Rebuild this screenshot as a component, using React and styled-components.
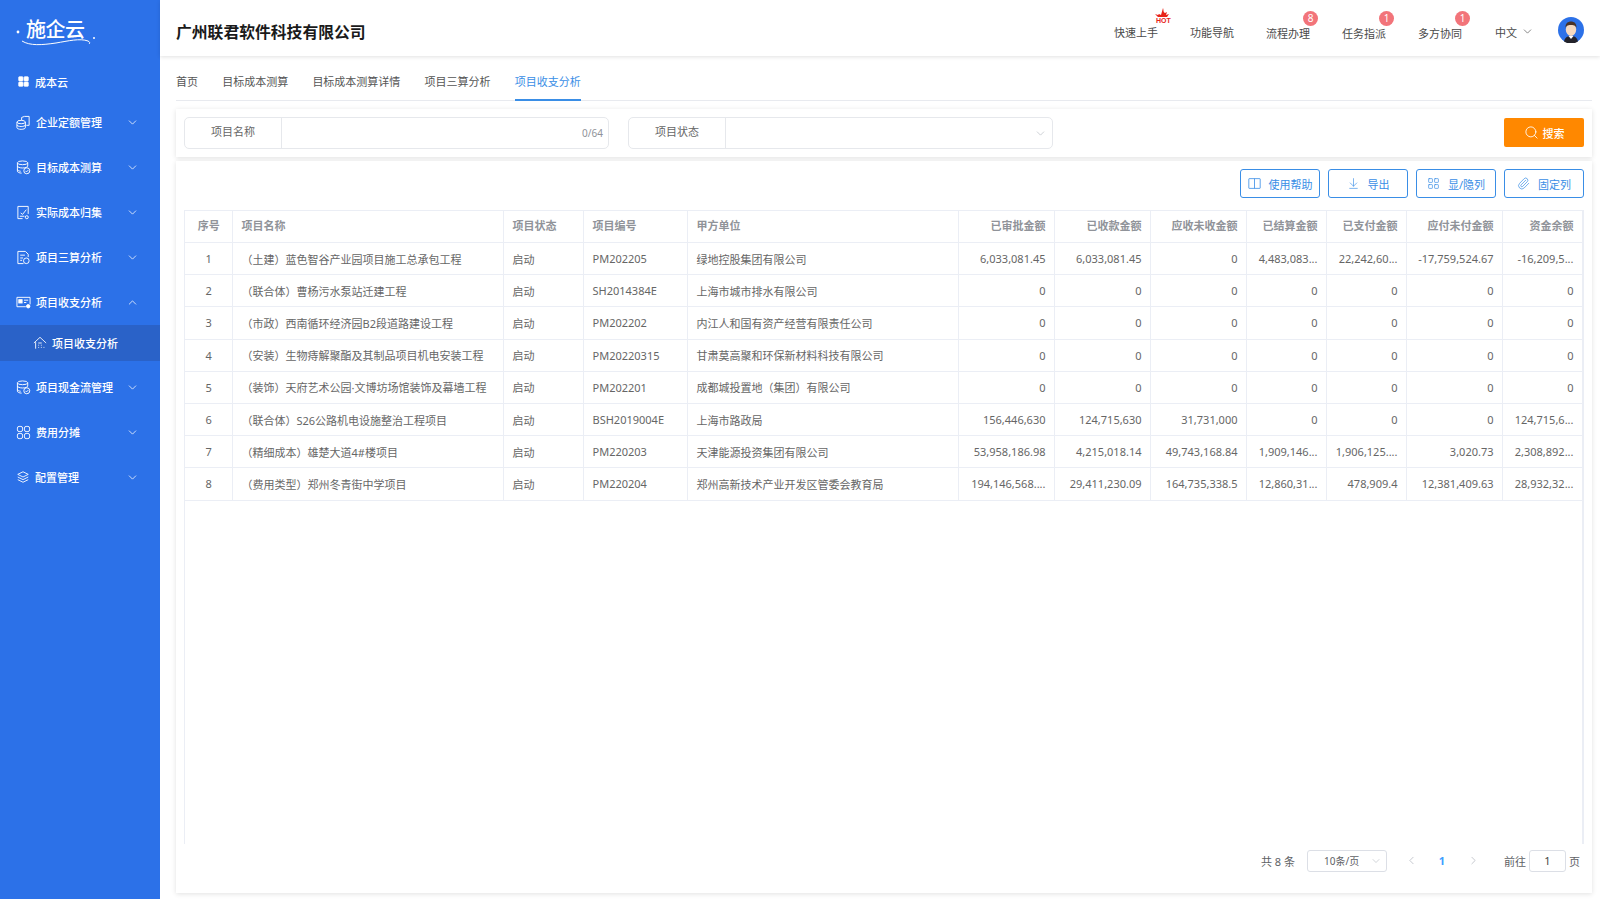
import React from 'react'
import styled, { createGlobalStyle } from 'styled-components'
import { ChevronDown, ChevronUp, ChevronLeft, ChevronRight, Search, ArrowDownToLine, LayoutGrid, Paperclip } from 'lucide-react'

const GlobalStyle = createGlobalStyle`
  html, body { margin: 0; padding: 0; height: 100%; background: #fff; }
  body { font-family: "Noto Sans", "Noto Sans CJK SC", sans-serif; font-size: 11px; color: #606266; overflow: hidden; }
  * { box-sizing: border-box; }
`

const Shell = styled.div`
  display: grid;
  grid-template-columns: 160px 1fr;
  height: 899px;
`

const Sidebar = styled.aside`
  background: #2c71e8;
  color: #fff;
  display: flex;
  flex-direction: column;
`

const LogoBox = styled.div`
  position: relative;
  height: 63.5px;
`

const LogoText = styled.div`
  position: absolute;
  left: 26px;
  top: 15px;
  font-size: 20px;
  line-height: 30px;
  font-weight: 500;
  letter-spacing: -0.5px;
  color: #fff;
`

const LogoArt = styled.svg`
  position: absolute;
  left: 0;
  top: 0;
`

const MenuItem = styled.div`
  height: ${p => (p.$short ? 36 : 45)}px;
  display: flex;
  align-items: center;
  padding: 0 ${p => (p.$short ? 18 : 21)}px 0 ${p => (p.$short ? 18 : 16)}px;
  gap: ${p => (p.$short ? 6 : 5)}px;
  font-weight: 500;
`

const MenuLabel = styled.span`
  flex: 1;
`

const SubItem = styled.div`
  height: 36px;
  margin-bottom: 4px;
  display: flex;
  align-items: center;
  gap: 5px;
  padding-left: 33px;
  background: #2a62c8;
  font-weight: 500;
`

const Glyph = styled.svg.attrs({ viewBox: '0 0 16 16', fill: 'none', stroke: 'currentColor', strokeWidth: 1 })`
  width: ${p => p.$size || 15}px;
  height: ${p => p.$size || 15}px;
  flex: none;
`

const Main = styled.main`
  display: flex;
  flex-direction: column;
  min-width: 0;
`

const Header = styled.header`
  height: 56px;
  flex: none;
  display: flex;
  align-items: center;
  padding: 0 16px;
  box-shadow: 0 1px 4px rgba(0, 0, 0, 0.12);
  position: relative;
`

const Company = styled.h1`
  flex: 1;
  margin: 0;
  padding-top: 6px;
  font-size: 15.8px;
  font-weight: 700;
  color: #1a1a1a;
`

const NavItem = styled.div`
  position: relative;
  width: 44px;
  margin-left: 32px;
  padding-top: ${p => (p.$low ? 9 : 7)}px;
  white-space: nowrap;
  color: #4a4a4a;
`

const Badge = styled.span`
  position: absolute;
  right: -8px;
  top: -5px;
  width: 15px;
  height: 15px;
  border-radius: 50%;
  background: #f2747a;
  color: #fff;
  font-size: 10px;
  line-height: 15px;
  text-align: center;
`

const HotMark = styled.svg`
  position: absolute;
  left: 40px;
  top: -9px;
`

const Lang = styled.div`
  display: flex;
  align-items: center;
  gap: 4px;
  margin-left: 33px;
  padding-top: 7px;
  color: #4a4a4a;
`

const Avatar = styled.svg`
  margin: 3px 0 0 24px;
  flex: none;
`

const Tabs = styled.nav`
  flex: none;
  display: flex;
  gap: 24.2px;
  height: 45px;
  margin: 0 8px 8px 16px;
  border-bottom: 1px solid #e8eaef;
  padding-top: 8px;
`

const Tab = styled.div`
  height: 37px;
  line-height: 36px;
  color: ${p => (p.$active ? '#3a8ee6' : '#555')};
  border-bottom: 2px solid ${p => (p.$active ? '#3a8ee6' : 'transparent')};
`

const Card = styled.section`
  margin: 0 8px 0 16px;
  background: #fff;
  box-shadow: 0 1px 5px rgba(0, 0, 0, 0.12);
`

const SearchCard = styled(Card)`
  flex: none;
  height: 48px;
  padding: 8px 8px 0;
  display: flex;
  gap: 19px;
  margin-bottom: 4px;
`

const Field = styled.div`
  width: 425px;
  height: 32px;
  display: flex;
  align-items: center;
  border: 1px solid #e6e8ec;
  border-radius: 5px;
`

const FieldLabel = styled.div`
  width: 97px;
  height: 100%;
  line-height: 28px;
  text-align: center;
  color: #666;
  border-right: 1px solid #e6e8ec;
`

const FieldValue = styled.div`
  flex: 1;
  display: flex;
  justify-content: flex-end;
  align-items: center;
  padding-right: 5px;
  color: #909399;
  font-size: 10px;
`

const SearchButton = styled.button`
  margin: 1px 0 0 auto;
  width: 80px;
  height: 29px;
  display: flex;
  align-items: center;
  justify-content: center;
  gap: 4px;
  border: 0;
  border-radius: 2px;
  background: #ff8800;
  color: #fff;
  font: inherit;
  font-weight: 500;
`

const TableCard = styled(Card)`
  flex: 1;
  min-height: 0;
  margin-bottom: 6px;
  padding: 8px 8px 0;
  display: flex;
  flex-direction: column;
`

const Toolbar = styled.div`
  flex: none;
  display: flex;
  justify-content: flex-end;
  gap: 8px;
  margin-bottom: 12px;
`

const ToolButton = styled.button`
  width: 80px;
  height: 29px;
  display: flex;
  align-items: center;
  justify-content: center;
  gap: 8px;
  background: #fff;
  border: 1px solid #3a8ee6;
  border-radius: 3px;
  color: #3a8ee6;
  font: inherit;
`

const TableWrap = styled.div`
  flex: none;
  height: 634px;
  border-left: 1px solid #ebeef5;
  border-right: 2px solid #ebeef5;
`

const Table = styled.table`
  width: 1397px;
  table-layout: fixed;
  border-collapse: collapse;
`

const HeadCell = styled.th`
  height: 32px;
  padding: 0 8px 3px 9px;
  font-weight: 700;
  color: #909399;
  border: 1px solid #ebeef5;
  border-left: 0;
  text-align: ${p => p.$align || 'left'};
`

const Cell = styled.td`
  height: 32.2px;
  padding: 0 8px 0 9px;
  white-space: nowrap;
  overflow: hidden;
  color: #666;
  border-right: 1px solid #ebeef5;
  border-bottom: 1px solid #ebeef5;
  text-align: ${p => p.$align || 'left'};
`

const Pager = styled.div`
  flex: 1;
  display: flex;
  align-items: center;
  justify-content: flex-end;
  padding: 0 4px 16px 0;
  color: #606266;
`

const PageSelect = styled.div`
  width: 80px;
  height: 22px;
  margin: 0 18px 0 12px;
  padding: 0 4px 0 16px;
  display: flex;
  align-items: center;
  justify-content: space-between;
  border: 1px solid #dcdfe6;
  border-radius: 3px;
  font-size: 10px;
`

const PageNum = styled.span`
  width: 16px;
  margin: 0 17px 0 16px;
  text-align: center;
  color: #409eff;
  font-weight: 700;
`

const PageInput = styled.div`
  width: 37px;
  height: 22px;
  margin: 0 3px;
  line-height: 20px;
  text-align: center;
  border: 1px solid #dcdfe6;
  border-radius: 3px;
  color: #444;
`

const GoLabel = styled.span`
  margin-left: 24px;
`

const icons = {
  cloud: <Glyph $size={11} stroke="none" fill="currentColor"><rect x="1" y="1" width="6.2" height="6.2" rx="1" fill="currentColor" /><rect x="8.8" y="1" width="6.2" height="6.2" rx="1" fill="currentColor" /><rect x="1" y="8.8" width="6.2" height="6.2" rx="1" fill="currentColor" /><rect x="8.8" y="8.8" width="6.2" height="6.2" rx="1" fill="currentColor" /></Glyph>,
  quota: <Glyph><path d="M6 5.5V2.6l3-1.1h5v9.5h-3" /><ellipse cx="5.5" cy="7.5" rx="4.5" ry="1.8" /><path d="M1 7.5v6c0 1 2 1.8 4.5 1.8s4.5-.8 4.5-1.8v-6M1 10.5c0 1 2 1.8 4.5 1.8s4.5-.8 4.5-1.8" /></Glyph>,
  target: <Glyph><ellipse cx="7" cy="3" rx="5.5" ry="2" /><path d="M1.5 3v9c0 1 2 2 4.5 2M1.5 6.5c0 1 2.5 2 5.5 2s5.5-1 5.5-2V3M1.5 10c0 1 1.5 1.8 3.5 2" /><circle cx="11.5" cy="11.5" r="3.2" /><path d="M10 11.5l1.2 1.2 2-2" /></Glyph>,
  actual: <Glyph><path d="M7 14.5H2v-13h11v8" /><path d="M5 8.5l2 1.5 4-5" /><path d="M4 12h5" /><circle cx="11.5" cy="13" r="1.6" /></Glyph>,
  settle: <Glyph><path d="M8 14.5H2v-13h8l3 3v3" /><path d="M4.5 5.5h5M4.5 8.5h3M4.5 11h2" /><circle cx="11" cy="11.5" r="3" /></Glyph>,
  income: <Glyph><path d="M15 10V2.5H1v10h9.5" /><rect x="3" y="5" width="3.5" height="3.5" fill="currentColor" /><path d="M8.5 5.5H13M8.5 8H11" /><circle cx="13" cy="12" r="1.8" fill="currentColor" /></Glyph>,
  share: <Glyph><rect x="1.5" y="1.5" width="5.5" height="5.5" rx="1.8" /><rect x="9" y="1.5" width="5.5" height="5.5" rx="1.8" /><rect x="1.5" y="9" width="5.5" height="5.5" rx="1.8" /><rect x="9" y="9" width="5.5" height="5.5" rx="1.8" /></Glyph>,
  config: <Glyph $size={14}><path d="M8 2l6 3-6 3-6-3z" /><path d="M2 8l6 3 6-3M2 11l6 3 6-3" /></Glyph>,
  home: <Glyph $size={14}><path d="M1 8l7-6.5L15 8" /><path d="M3 7v7.5M6 8h4M6 10.5h1M6 13h1M9 10.5h1M9 13h1M12 13h1" /></Glyph>,
  book: <Glyph $size={13}><rect x="1" y="2" width="14" height="12" rx="0.5" /><path d="M8 2v12" /></Glyph>,
}

const Chevron = ({ up }) => (up ? <ChevronUp size={13} strokeWidth={1.4} /> : <ChevronDown size={13} strokeWidth={1.4} />)

const menuBefore = [
  ['quota', '企业定额管理'],
  ['target', '目标成本测算'],
  ['actual', '实际成本归集'],
  ['settle', '项目三算分析'],
]

const menuAfter = [
  ['target', '项目现金流管理'],
  ['share', '费用分摊'],
  ['config', '配置管理'],
]

const tabs = ['首页', '目标成本测算', '目标成本测算详情', '项目三算分析', '项目收支分析']

const columns = [
  [47, '序号', 'center'],
  [271, '项目名称'],
  [80, '项目状态'],
  [104, '项目编号'],
  [271, '甲方单位'],
  [96, '已审批金额', 'right'],
  [96, '已收款金额', 'right'],
  [96, '应收未收金额', 'right'],
  [80, '已结算金额', 'right'],
  [80, '已支付金额', 'right'],
  [96, '应付未付金额', 'right'],
  [80, '资金余额', 'right'],
]

const rows = [
  ['（土建）蓝色智谷产业园项目施工总承包工程', 'PM202205', '绿地控股集团有限公司', '6,033,081.45', '6,033,081.45', '0', '4,483,083...', '22,242,60...', '-17,759,524.67', '-16,209,5...'],
  ['（联合体）曹杨污水泵站迁建工程', 'SH2014384E', '上海市城市排水有限公司', '0', '0', '0', '0', '0', '0', '0'],
  ['（市政）西南循环经济园B2段道路建设工程', 'PM202202', '内江人和国有资产经营有限责任公司', '0', '0', '0', '0', '0', '0', '0'],
  ['（安装）生物痔解聚酯及其制品项目机电安装工程', 'PM20220315', '甘肃莫高聚和环保新材料科技有限公司', '0', '0', '0', '0', '0', '0', '0'],
  ['（装饰）天府艺术公园·文博坊场馆装饰及幕墙工程', 'PM202201', '成都城投置地（集团）有限公司', '0', '0', '0', '0', '0', '0', '0'],
  ['（联合体）S26公路机电设施整治工程项目', 'BSH2019004E', '上海市路政局', '156,446,630', '124,715,630', '31,731,000', '0', '0', '0', '124,715,6...'],
  ['（精细成本）雄楚大道4#楼项目', 'PM220203', '天津能源投资集团有限公司', '53,958,186.98', '4,215,018.14', '49,743,168.84', '1,909,146...', '1,906,125....', '3,020.73', '2,308,892...'],
  ['（费用类型）郑州冬青街中学项目', 'PM220204', '郑州高新技术产业开发区管委会教育局', '194,146,568....', '29,411,230.09', '164,735,338.5', '12,860,31...', '478,909.4', '12,381,409.63', '28,932,32...'],
]

const Logo = () => (
  <LogoBox>
    <LogoArt width="110" height="56" viewBox="0 0 110 56" fill="none">
      <circle cx="18" cy="32" r="1.4" fill="#fff" />
      <circle cx="94" cy="38" r="1" fill="#fff" />
      <path d="M22 41c8 5 20 4 34 2 12-2 24-5 32-2 2 1 2 2 1 3" stroke="#fff" strokeWidth="1" />
    </LogoArt>
    <LogoText>施企云</LogoText>
  </LogoBox>
)

const Hot = () => (
  <HotMark width="20" height="16" viewBox="0 0 20 16">
    <path d="M9 0c1 3 0 4 2 5l2-1-1 3 3-1-2 3H4L1 6l3 1 1-1 2 1z" fill="#e8231a" />
    <text x="2" y="15" fontSize="7" fontWeight="900" fill="#e8231a" fontFamily="Liberation Sans, sans-serif">HOT</text>
  </HotMark>
)

const Portrait = () => (
  <Avatar width="26" height="26" viewBox="0 0 26 26">
    <circle cx="13" cy="13" r="13" fill="#2c71e8" />
    <path d="M6 24.5c1-4.5 4-5.5 7-5.5s6 1 7 5.5a13 13 0 0 1-14 0z" fill="#23232b" />
    <path d="M10.5 19l2.5 3 2.5-3z" fill="#fff" />
    <ellipse cx="13" cy="12.5" rx="5.2" ry="6.5" fill="#f5d9c0" />
    <path d="M7.6 11c-.6-4.5 2.4-6.5 5.4-6.5s6 2 5.4 6.5c-.6-2-1.6-3-5.4-3s-4.800 1-5.400 3z" fill="#4a3326" />
  </Avatar>
)

export default function App() {
  return (
    <Shell>
      <GlobalStyle />
      <Sidebar>
        <Logo />
        <MenuItem $short>
          {icons.cloud}
          <MenuLabel>成本云</MenuLabel>
        </MenuItem>
        {menuBefore.map(([icon, label]) => (
          <MenuItem key={label}>
            {icons[icon]}
            <MenuLabel>{label}</MenuLabel>
            <Chevron />
          </MenuItem>
        ))}
        <MenuItem>
          {icons.income}
          <MenuLabel>项目收支分析</MenuLabel>
          <Chevron up />
        </MenuItem>
        <SubItem>
          {icons.home}
          <span>项目收支分析</span>
        </SubItem>
        {menuAfter.map(([icon, label]) => (
          <MenuItem key={label}>
            {icons[icon]}
            <MenuLabel>{label}</MenuLabel>
            <Chevron />
          </MenuItem>
        ))}
      </Sidebar>
      <Main>
        <Header>
          <Company>广州联君软件科技有限公司</Company>
          <NavItem>快速上手<Hot /></NavItem>
          <NavItem>功能导航</NavItem>
          <NavItem $low>流程办理<Badge>8</Badge></NavItem>
          <NavItem $low>任务指派<Badge>1</Badge></NavItem>
          <NavItem $low>多方协同<Badge>1</Badge></NavItem>
          <Lang>中文 <ChevronDown size={13} strokeWidth={1.2} /></Lang>
          <Portrait />
        </Header>
        <Tabs>
          {tabs.map((t, i) => <Tab key={t} $active={i === tabs.length - 1}>{t}</Tab>)}
        </Tabs>
        <SearchCard>
          <Field>
            <FieldLabel>项目名称</FieldLabel>
            <FieldValue>0/64</FieldValue>
          </Field>
          <Field>
            <FieldLabel>项目状态</FieldLabel>
            <FieldValue><ChevronDown size={13} strokeWidth={1.2} color="#b4b8c0" /></FieldValue>
          </Field>
          <SearchButton><Search size={15} strokeWidth={1.4} />搜索</SearchButton>
        </SearchCard>
        <TableCard>
          <Toolbar>
            <ToolButton>{icons.book}使用帮助</ToolButton>
            <ToolButton><ArrowDownToLine size={13} strokeWidth={1.2} />导出</ToolButton>
            <ToolButton><LayoutGrid size={13} strokeWidth={1.3} />显/隐列</ToolButton>
            <ToolButton><Paperclip size={13} strokeWidth={1.3} />固定列</ToolButton>
          </Toolbar>
          <TableWrap>
            <Table>
              <colgroup>
                {columns.map(([w, label]) => <col key={label} width={w} />)}
              </colgroup>
              <thead>
                <tr>
                  {columns.map(([, label, align]) => <HeadCell key={label} $align={align}>{label}</HeadCell>)}
                </tr>
              </thead>
              <tbody>
                {rows.map((r, i) => (
                  <tr key={r[1]}>
                    <Cell $align="center">{i + 1}</Cell>
                    <Cell>{r[0]}</Cell>
                    <Cell>启动</Cell>
                    <Cell>{r[1]}</Cell>
                    <Cell>{r[2]}</Cell>
                    {r.slice(3).map((v, j) => <Cell key={j} $align="right">{v}</Cell>)}
                  </tr>
                ))}
              </tbody>
            </Table>
          </TableWrap>
          <Pager>
            <span>共 8 条</span>
            <PageSelect>10条/页<ChevronDown size={12} strokeWidth={1.2} color="#b4b8c0" /></PageSelect>
            <ChevronLeft size={13} strokeWidth={1.4} color="#b4b8c0" />
            <PageNum>1</PageNum>
            <ChevronRight size={13} strokeWidth={1.4} color="#b4b8c0" />
            <GoLabel>前往</GoLabel>
            <PageInput>1</PageInput>
            <span>页</span>
          </Pager>
        </TableCard>
      </Main>
    </Shell>
  )
}
